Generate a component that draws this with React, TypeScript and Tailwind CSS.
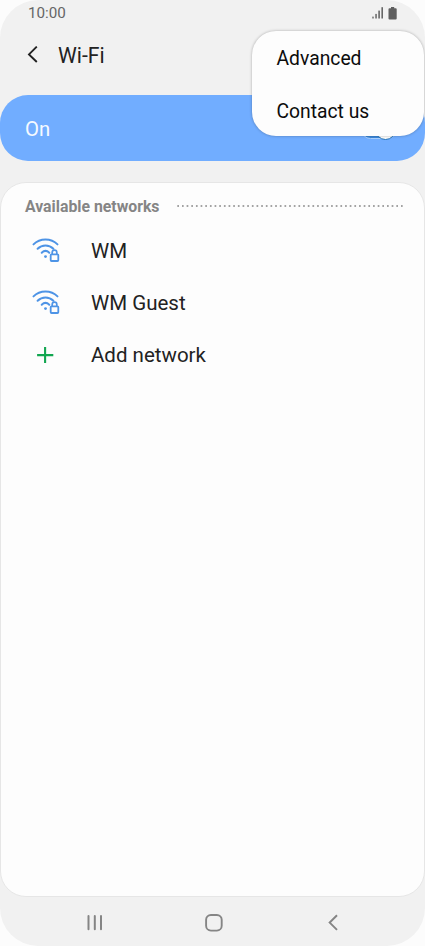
type Network = {
  name: string;
};

const NETWORKS: Network[] = [{ name: "WM" }, { name: "WM Guest" }];

const MENU_ITEMS = ["Advanced", "Contact us"];

function SignalIcon() {
  return (
    <svg width="12" height="13" viewBox="0 0 12 13" fill="#666666">
      <rect x="0.3" y="9.6" width="1.4" height="1.9" />
      <rect x="3.3" y="6.9" width="1.5" height="4.6" />
      <rect x="6.3" y="3.6" width="1.6" height="7.9" />
      <rect x="9.4" y="0.2" width="1.6" height="11.3" />
    </svg>
  );
}

function BatteryIcon() {
  return (
    <svg width="9" height="13" viewBox="0 0 9 13" fill="#5f5f5f">
      <path d="M3 0h3.2v1.2h1.5q1 0 1 1v9.2q0 1-1 1h-6.2q-1 0-1-1v-9.2q0-1 1-1h1.5z" />
    </svg>
  );
}

function WifiLockIcon() {
  return (
    <svg width="28" height="26" viewBox="0 0 28 26" fill="none" stroke="#4e94e6" strokeWidth="2" strokeLinecap="round">
      <path d="M1.5 6.4C8-0.2 19-0.2 25.5 6.4" />
      <path d="M5.6 10.8C10 6.4 17 6.4 21.4 10.8" />
      <path d="M9.7 14.7C12 12.5 15 12.5 17.3 14.7" />
      <circle cx="13.5" cy="18.6" r="1.4" fill="#4e94e6" stroke="none" />
      <rect x="18.7" y="16.3" width="7.6" height="6.7" rx="0.8" strokeWidth="1.8" />
      <path d="M20.2 16v-1.5a2.3 2.3 0 0 1 4.6 0v1.5" strokeWidth="1.7" />
    </svg>
  );
}

function NetworkRow({ name }: Network) {
  return (
    <li className="flex h-[52px] items-center">
      <span className="flex w-[66px] pl-[7px]">
        <WifiLockIcon />
      </span>
      <span>{name}</span>
    </li>
  );
}

function OverflowMenu() {
  return (
    <div className="absolute top-[31px] right-px h-[105px] w-[172px] rounded-[24px] bg-[#fdfdfd] pt-[2px] pl-[24.5px] text-[19.3px] text-[#0c0c0c] shadow-[0_0_3px_rgba(0,0,0,0.3)]">
      {MENU_ITEMS.map((item) => (
        <button key={item} className="flex h-[53px] items-center">
          {item}
        </button>
      ))}
    </div>
  );
}

export default function App() {
  return (
    <div className="bg-[#fcfcfc] font-['Roboto',sans-serif]">
      <div className="relative flex h-[946px] w-[425px] flex-col overflow-hidden rounded-[38px] bg-[#f1f1f1]">
        <header className="h-[95px]">
          <div className="flex h-[26px] items-center justify-between pr-[28px] pl-[28px] text-[15.2px] text-[#666666]">
            <span>10:00</span>
            <div className="flex items-center gap-[4px]">
              <SignalIcon />
              <BatteryIcon />
            </div>
          </div>
          <div className="flex h-[57px] items-center pl-[27px] text-[#222222]">
            <svg width="12" height="18" viewBox="0 0 12 18" fill="none" stroke="currentColor" strokeWidth="1.9">
              <path d="M9.8 0.6 2 8.4l7.8 7.6" />
            </svg>
            <h1 className="pt-[2px] pl-[19px] text-[21.2px]">Wi-Fi</h1>
          </div>
        </header>

        <section className="flex h-[66px] items-center justify-between rounded-[28px] bg-[#71adff] pt-[2px] pr-[28px] pl-[25px] text-[20.3px] text-[#f5faff]">
          <span>On</span>
          <span className="flex h-[19px] w-[36px] items-center justify-end rounded-full border border-[#a9d0ff] bg-[#3c87d8]">
            <span className="size-[21px] shrink-0 rounded-full border border-[#1f70b5] bg-[#fdfdfd]" />
          </span>
        </section>

        <main className="mt-[21px] h-[715px] rounded-[26px] border border-[#e6e6e6] bg-[#fdfdfd] px-[24px]">
          <div className="flex h-[42px] items-center pt-[5px] text-[#858585]">
            <h2 className="w-[152px] shrink-0 text-[15.8px] font-bold">Available networks</h2>
            <svg width="228" height="2" viewBox="0 0 228 2" className="-mt-[2px] shrink-0">
              <path d="M0.3 1H226.5" stroke="#858585" strokeWidth="1.7" strokeDasharray="1.7 2.96" />
            </svg>
          </div>
          <ul className="text-[20.5px] text-[#222222]">
            {NETWORKS.map((network) => (
              <NetworkRow key={network.name} name={network.name} />
            ))}
            <li className="flex h-[53px] items-center">
              <span className="flex w-[66px] pl-[12px]">
                <svg width="17" height="17" viewBox="0 0 17 17" stroke="#12a650" strokeWidth="2.1">
                  <path d="M8.1 0.1v16M0.1 8.1h16.2" />
                </svg>
              </span>
              <span>Add network</span>
            </li>
          </ul>
        </main>

        <nav className="flex h-[49px] items-center pt-[3px] pl-[86px]">
          <svg width="16" height="18" viewBox="0 0 16 18" stroke="#858585" strokeWidth="2" strokeLinecap="round">
            <path d="M2.5 2v13.2M8.8 2v13.2M15 2v13.2" />
          </svg>
          <svg width="18" height="18" viewBox="0 0 18 18" fill="none" stroke="#858585" strokeWidth="1.9" className="ml-[102.5px]">
            <rect x="1.1" y="1" width="15.6" height="15.6" rx="4.8" />
          </svg>
          <svg width="11" height="18" viewBox="0 0 11 18" fill="none" stroke="#858585" strokeWidth="2" className="ml-[105px]">
            <path d="M9 1.2 1.7 8.6 9 15.9" />
          </svg>
        </nav>

        <OverflowMenu />
      </div>
    </div>
  );
}
